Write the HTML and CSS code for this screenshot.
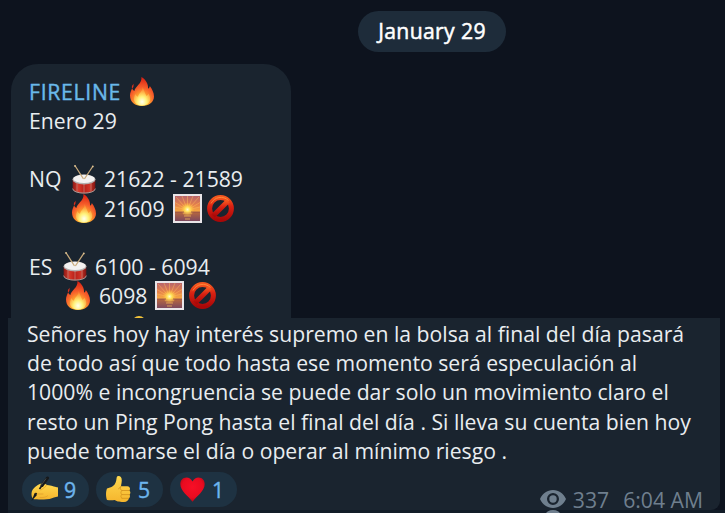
FILE: index.html
```html
<!DOCTYPE html>
<html lang="es">
<head>
<meta charset="utf-8">
<title>FIRELINE</title>
<link rel="stylesheet" href="styles.css">
</head>
<body>
<svg class="defs" aria-hidden="true">
  <defs>
    <radialGradient id="flameOuter" cx=".5" cy=".86" r=".85">
      <stop offset="0" stop-color="#ffe44a"/><stop offset=".3" stop-color="#ffab2e"/><stop offset=".58" stop-color="#f7602b"/><stop offset="1" stop-color="#d91d12"/>
    </radialGradient>
    <radialGradient id="flameInner" cx=".5" cy=".8" r=".7">
      <stop offset="0" stop-color="#fffff0"/><stop offset=".4" stop-color="#fff27a"/><stop offset="1" stop-color="#ff9b38" stop-opacity=".5"/>
    </radialGradient>
    <linearGradient id="drumSide">
      <stop offset="0" stop-color="#8e1a16"/><stop offset=".25" stop-color="#d63a2b"/><stop offset=".5" stop-color="#b82019"/><stop offset=".75" stop-color="#cf3528"/><stop offset="1" stop-color="#7d1412"/>
    </linearGradient>
    <linearGradient id="sky" x2="0" y2="1">
      <stop offset="0" stop-color="#b7646c"/><stop offset=".35" stop-color="#e5804b"/><stop offset=".62" stop-color="#f7a940"/><stop offset=".64" stop-color="#b8683f"/><stop offset="1" stop-color="#7d485e"/>
    </linearGradient>
    <radialGradient id="sun"><stop offset="0" stop-color="#fffbd0"/><stop offset=".35" stop-color="#ffe25a"/><stop offset="1" stop-color="#ffb637" stop-opacity="0"/></radialGradient>
    <linearGradient id="ban" x2="0" y2="1"><stop offset="0" stop-color="#f4571f"/><stop offset=".4" stop-color="#d92112"/><stop offset="1" stop-color="#a90808"/></linearGradient>
    <linearGradient id="skin" x2="0" y2="1"><stop offset="0" stop-color="#ffd94f"/><stop offset="1" stop-color="#f5b52d"/></linearGradient>
    <radialGradient id="heart" cx=".5" cy=".4" r=".6"><stop offset="0" stop-color="#f80f26"/><stop offset=".7" stop-color="#e90b20"/><stop offset="1" stop-color="#b80716"/></radialGradient>
  </defs>
  <symbol id="fire" viewBox="0 0 24 29">
    <path fill="url(#flameOuter)" d="M11.400 0C16 2.800 18.500 7 18 11.800c.8-.5 1.700-1.500 1.800-2.800 2.200 3 4.200 6.500 4.200 10.500C24 25 19 29 12 29S0 25 0 18.500c0-3 1.200-5 2.100-7.300.6 1.300 1.200 2.300 2.300 2.800C4.600 9.800 12.500 6.500 11.400 0Z"/>
    <path fill="#d9301d" d="M4.200 6.500C2 8 1.500 9.500 2 11.500c1-.7 1.600-1.600 1.500-2.700C3.400 8 3.600 7.200 4.200 6.500Z"/>
    <path fill="url(#flameInner)" d="M12.500 10c2 3.500 2 6 4 9 1-.4 1.500-1.200 1.700-2.500 1.600 2 2.500 4.500 1.800 7-1 3.300-4 5-8 5s-7.500-2-8-5.500c-.3-2.500.5-4.500 1.500-6 .5 1.400 1.200 2.200 2.500 2.700.5-3.700 5-5.200 4.500-9.700Z"/>
  </symbol>
  <symbol id="drum" viewBox="0 0 24 29">
    <path fill="url(#drumSide)" d="M.7 14.500v9c0 6.300 22.600 6.300 22.600 0v-9Z"/>
    <path fill="none" stroke="#c98a80" stroke-width=".7" d="M5 18v8.500M12 19v9M19 18v8.500"/>
    <path fill="none" stroke="#a99c98" stroke-width="1" d="M.7 23.600c0 6 22.600 6 22.600 0"/>
    <ellipse cx="12" cy="14.500" rx="11.500" ry="4.900" fill="#b3afae"/>
    <ellipse cx="12" cy="13.900" rx="10.700" ry="4.200" fill="#f4f2f1"/>
    <path fill="none" stroke="#c9aa7b" stroke-width="1.300" stroke-linecap="round" d="m3.200 1 8 12.500M20.700 1.500l-8 12"/>
    <circle cx="3" cy=".9" r=".9" fill="#dfc393"/><circle cx="20.800" cy="1.400" r=".9" fill="#dfc393"/>
  </symbol>
  <symbol id="sunrise" viewBox="0 0 29 29">
    <path fill="#e9e5e8" d="M0 0h29v29H0z"/><path fill="url(#sky)" d="M2 2h25v25H2z"/>
    <path stroke="#ffc05c" stroke-width=".9" opacity=".5" d="M14.500 16 3 3M14.500 16 9 2M14.500 16V2M14.500 16 20 2M14.500 16 26 3M14.500 16 2 8.500M14.500 16 27 8.500M14.500 16 2 13M14.500 16l12.500-3"/>
    <circle cx="14.500" cy="15.500" r="7" fill="url(#sun)"/>
    <path stroke="#f5b858" stroke-width="1.300" opacity=".5" d="M10 19h9m-8 3h7m-6 3h5"/>
    <path stroke="#8e4a4b" stroke-width=".8" d="M2 18h9m7 0h9"/>
  </symbol>
  <symbol id="noentry" viewBox="0 0 27 27">
    <g fill="none" stroke="url(#ban)" stroke-width="5"><circle cx="13.500" cy="13.500" r="10.900"/><path d="M6 21 21 6"/></g>
    <path fill="none" stroke="#ff9140" stroke-width="1" opacity=".8" d="M4 8.500a11 11 0 0 1 17.500-3"/>
  </symbol>
  <symbol id="writing" viewBox="0 0 28 26">
    <path fill="url(#skin)" d="M1 15C3 11 7.500 8 11 7.500c2-.2 3.500.2 4.500 1.500 3 .2 7 1.400 9.500 2 1 .3 2 .4 2 .4v9.200c-3 .2-5 2-8.500 2.300-6 .5-10 .6-15 .4C.5 23 0 18 1 15Z"/>
    <path fill="none" stroke="#e0a02c" stroke-width=".8" stroke-linecap="round" d="M15.500 9c0 2-3.500 3-5.500 5M4 18h8M9 21.500c3 .4 6-.3 7.500-1.600"/>
    <path fill="none" stroke="#17191b" stroke-width="3" stroke-linecap="round" d="M16.500 2 11 9.500"/>
    <path fill="none" stroke="#17191b" stroke-width="1.600" d="M12 8 8.500 13M5.500 17 4 19"/>
    <path fill="#17191b" d="m3.700 17 2.300 2L.5 25Z"/>
    <path stroke="#59605f" stroke-width=".7" d="M15 2.500 10 9.500"/>
  </symbol>
  <symbol id="thumb" viewBox="0 0 25 26">
    <path fill="url(#skin)" d="M1 12.500c2-.6 4-1 6-2.500 2.600-2 3.200-4.500 3.600-8C10.800.6 11.500 0 12.500 0c3.500 0 4 4 2.400 10.200h6.400c2.500 0 3.600 3 1.900 4.300 1.600 1 1.500 3.300.2 4.100 1 1.200.7 3-.7 3.600C23 24 21 26 18 26c-6 0-7.500-1-9.500-2-2 .5-5 .4-7.500 0-1.300-3-1.300-8.500 0-11.500Z"/>
    <path fill="none" stroke="#d6961f" stroke-width=".9" stroke-linecap="round" d="M14.900 10.200c-.7 1.300-1.500 2-2.300 2.500M16 14.500h7.200M16 18.600h7.400M16 22.300h6.700M16 14.500c-1.500-.5-2-1.500-1.500-3M15.800 18.600c-1.300-1-1.300-3 .2-4.100M16 22.300c-1.500-.7-1.500-2.800-.2-3.700"/>
  </symbol>
  <symbol id="love" viewBox="0 0 25 25"><path fill="url(#heart)" d="M12.500 4.500C14 1.700 16 .4 18.500.4c3.700 0 6.200 2.800 6.200 6.600 0 7-7.500 11.500-12.200 17.700C7.800 18.500.3 14 .3 7 .3 3.200 2.800.4 6.500.4c2.500 0 4.500 1.300 6 4.100Z"/></symbol>
  <symbol id="eye" viewBox="0 0 26 18">
    <path fill="currentColor" fill-rule="evenodd" d="M13 0c6 0 10.500 3.500 13 9-2.500 5.500-7 9-13 9S2.500 14.500 0 9C2.500 3.500 7 0 13 0Zm0 3a6 6 0 1 0 0 12 6 6 0 0 0 0-12Z"/><circle cx="13" cy="9" r="3.700" fill="currentColor"/>
  </symbol>
</svg>

<main class="chat">
  <div class="date">January 29</div>
  <section class="signal">
    <div class="row"><b class="sender">FIRELINE</b><svg class="emoji gap-sender"><use href="#fire"/></svg></div>
    <div class="row">Enero 29</div>
    <div class="row"></div>
    <div class="row"><span class="ticker nq">NQ</span><svg class="emoji"><use href="#drum"/></svg><span class="value">21622 - 21589</span></div>
    <div class="row"><span class="ticker nq"></span><svg class="emoji"><use href="#fire"/></svg><span class="value">21609</span><svg class="picture"><use href="#sunrise"/></svg><svg class="stop"><use href="#noentry"/></svg></div>
    <div class="row"></div>
    <div class="row"><span class="ticker es">ES</span><svg class="emoji"><use href="#drum"/></svg><span class="value">6100 - 6094</span></div>
    <div class="row"><span class="ticker es-indent"></span><svg class="emoji"><use href="#fire"/></svg><span class="value">6098</span><svg class="picture"><use href="#sunrise"/></svg><svg class="stop"><use href="#noentry"/></svg></div>
    <div class="peek"></div>
  </section>
  <section class="message">
    <p class="text">Señores hoy hay interés supremo en la bolsa al final del día pasará<br>de todo así que todo hasta ese momento será especulación al<br>1000% e incongruencia se puede dar solo un movimiento claro el<br>resto un Ping Pong hasta el final del día . Si lleva su cuenta bien hoy<br>puede tomarse el día o operar al mínimo riesgo .</p>
    <footer class="footer">
      <div class="reactions">
        <span class="reaction"><svg class="write"><use href="#writing"/></svg>9</span>
        <span class="reaction"><svg class="like"><use href="#thumb"/></svg>5</span>
        <span class="reaction"><svg class="heart"><use href="#love"/></svg>1</span>
      </div>
      <div class="meta"><svg class="eye"><use href="#eye"/></svg><span class="views">337</span><span>6:04 AM</span></div>
    </footer>
  </section>
  <div class="bottom"><span class="next-eye"></span></div>
</main>
</body>
</html>
```

FILE: styles.css
```css
* { box-sizing: border-box; }
body {
  margin: 0;
  background: #0d131e;
  color: #e9edf0;
  font: 21.2px/29.17px "Open Sans", "Noto Sans", sans-serif;
}
.defs { position: absolute; width: 0; height: 0; }
svg { display: block; flex: none; }
.chat { display: flex; flex-direction: column; width: 725px; height: 513px; overflow: hidden; padding-top: 11px; }
.date {
  flex: none;
  width: 148px;
  height: 41px;
  margin-left: 358px;
  border-radius: 21px;
  background: #1e2c3a;
  color: #fff;
  font-weight: 400;
  -webkit-text-stroke: .5px currentColor;
  font-size: 21.2px;
  letter-spacing: .35px;
  line-height: 40px;
  text-align: center;
  white-space: nowrap;
}
.signal {
  flex: none;
  width: 280px;
  height: 254px;
  margin: 12px 0 0 11px;
  padding: 13px 0 0 18px;
  border-radius: 27px 27px 0 0;
  background: #1a242f;
  overflow: hidden;
}
.row { display: flex; align-items: center; height: 29.17px; white-space: nowrap; }
.sender { color: #69b9ea; font-weight: 400; -webkit-text-stroke: .4px currentColor; font-size: 21.2px; letter-spacing: .7px; }
.emoji { width: 24px; height: 29px; }
.gap-sender { margin-left: 9px; }
.nq { width: 43px; }
.es { width: 34px; }
.es-indent { width: 37px; }
.value { margin-left: 8px; }
.es-indent ~ .value { margin-left: 9px; }
.picture { width: 29px; height: 29px; margin-left: 8px; }
.stop { width: 27px; height: 27px; margin-left: 5px; }
.peek { width: 14px; height: 14px; margin: 6px 0 0 103px; border-radius: 50%; background: #f4c43a; }
.message { flex: none; width: 712px; height: 192px; margin-left: 8px; padding-top: 1px; border-radius: 0 0 9px 0; background: #1a242f; }
.text { margin: 0 0 0 19px; white-space: nowrap; font-size: 21.2px; }
.footer { display: flex; justify-content: space-between; padding: 7px 17px 0 14px; }
.reactions { display: flex; gap: 7px; }
.reaction {
  display: flex;
  align-items: center;
  width: 67px;
  height: 35px;
  padding-left: 9px;
  border-radius: 18px;
  background: #1e3242;
  color: #6db5ed;
  font-size: 21.2px;
  font-weight: 400;
  -webkit-text-stroke: .4px currentColor;
}
.write { width: 28px; height: 26px; margin-right: 5px; }
.like { width: 25px; height: 26px; margin: 0 7px 0 1px; }
.heart { width: 25px; height: 25px; margin: 0 7px 0 1px; }
.meta { display: flex; align-items: center; height: 35px; margin-top: 10px; color: #6f7f8e; font-size: 21.2px; }
.eye { width: 26px; height: 18px; }
.views { margin: 0 14px 0 7px; }
.bottom { flex: none; width: 717px; height: 4px; margin-left: 8px; padding-left: 538px; background: #121c28; }
.next-eye { display: block; width: 14px; height: 8px; border-radius: 50%; background: #6f7f8e; }
```
